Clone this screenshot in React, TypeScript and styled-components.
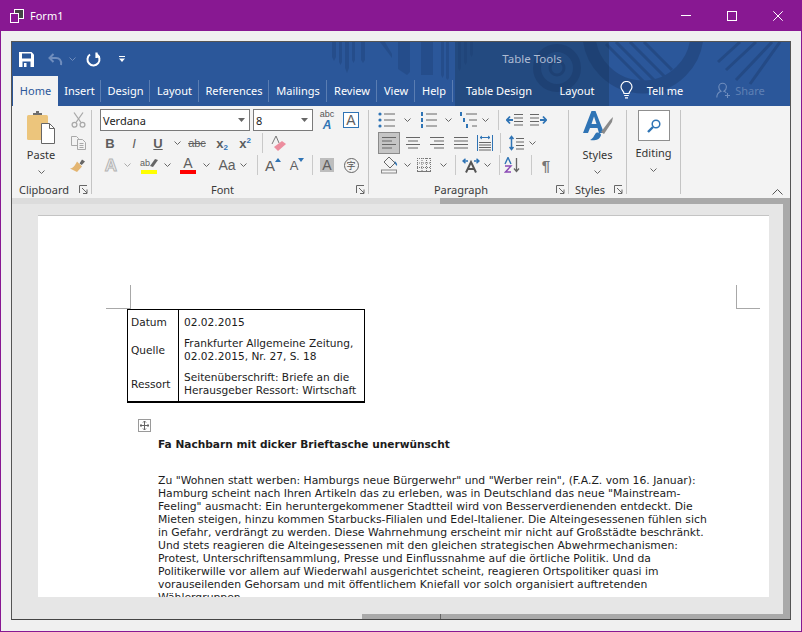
import React from 'react'
import styled, { createGlobalStyle } from 'styled-components'

const UI_FONT = `'Noto Sans', 'Open Sans', sans-serif`
const DOC_FONT = `'DejaVu Sans', Verdana, sans-serif`

const COLORS = {
  PURPLE: '#881892',
  BLUE: '#2b579a',
  BLUE_DARK: '#234a80',
  RIBBON: '#f3f3f3',
  DOC: '#e6e6e6',
  BAR: '#a9a9a9',
  ICON: '#5e5e5e',
  ICON_LIGHT: '#a9a9a9',
  ACCENT: '#2f74b5',
}

const GlobalStyle = createGlobalStyle`
  html, body {
    margin: 0;
    width: 802px;
    height: 632px;
    overflow: hidden;
    background: ${COLORS.PURPLE};
  }
`

const Window = styled.div`
  width: 802px;
  height: 632px;
  box-sizing: border-box;
  display: flex;
  flex-direction: column;
  border: 1px solid ${COLORS.PURPLE};
  border-top: 0;
  font-family: ${UI_FONT};
`

const TitleBar = styled.div`
  height: 31px;
  flex: none;
  display: flex;
  align-items: center;
  padding-left: 9px;
  background: ${COLORS.PURPLE};
  color: #fff;
  font-size: 11px;
`

const TitleText = styled.span`
  margin-left: 6px;
  flex: 1;
`

const WinButton = styled.span`
  width: 46px;
  height: 31px;
  display: flex;
  align-items: center;
  justify-content: center;
`

const Client = styled.div`
  flex: 1;
  min-height: 0;
  display: flex;
  padding: 10px 10px 11px 10px;
  background: #f0f0f0;
`

const Host = styled.div`
  flex: 1;
  min-width: 0;
  display: flex;
  flex-direction: column;
  border: 1px solid #555;
  border-bottom-color: #444;
`

const Header = styled.div`
  position: relative;
  height: 64px;
  flex: none;
  background: ${COLORS.BLUE};
  color: #fff;
  overflow: hidden;
`

const Pattern = styled.svg`
  position: absolute;
  left: 0;
  top: 0;
`

const Qat = styled.div`
  position: relative;
  height: 34px;
  display: flex;
  align-items: center;
`

const ContextLabel = styled.span`
  margin-left: 323px;
  width: 154px;
  margin-top: -2px;
  text-align: center;
  color: #aebbd3;
  font-size: 11.5px;
`

const Tabs = styled.div`
  position: relative;
  height: 30px;
  display: flex;
`

const Tab = styled.div<{ $w: number; $active?: boolean; $line?: boolean; $dim?: boolean }>`
  width: ${(p) => p.$w}px;
  height: 30px;
  box-sizing: border-box;
  flex: none;
  display: flex;
  align-items: center;
  justify-content: center;
  padding-bottom: 2px;
  font-size: 11px;
  background: ${(p) => (p.$active ? COLORS.RIBBON : 'transparent')};
  color: ${(p) => (p.$active ? COLORS.BLUE : p.$dim ? '#5f80b4' : '#fff')};
  position: relative;

  &::after {
    content: '';
    display: ${(p) => (p.$line ? 'block' : 'none')};
    position: absolute;
    right: 0;
    top: 4px;
    bottom: 4px;
    width: 1px;
    background: #5a7db2;
  }
`

const Ribbon = styled.div`
  position: relative;
  height: 92px;
  flex: none;
  display: flex;
  background: ${COLORS.RIBBON};
  color: #333;
`

const Group = styled.div<{ $w: number }>`
  width: ${(p) => p.$w}px;
  flex: none;
  display: flex;
  flex-direction: column;
  box-sizing: border-box;
`

const GroupBody = styled.div`
  flex: 1;
  min-height: 0;
  padding-top: 2px;
`

const GroupFoot = styled.div`
  height: 20px;
  display: flex;
  align-items: center;
  padding-top: 2px;
  box-sizing: border-box;
  font-size: 11px;
  color: #3a3a3a;
`

const FootLabel = styled.span`
  flex: 1;
  text-align: center;
`

const Launcher = styled.span`
  width: 15px;
  display: flex;
  justify-content: center;
`

const Divider = styled.div`
  width: 1px;
  flex: none;
  margin: 4px 0;
  background: #c4c4c4;
`

const Row = styled.div<{ $h: number }>`
  height: ${(p) => p.$h}px;
  display: flex;
  align-items: center;
`

const Cell = styled.span<{ $w: number; $ml?: number; $pressed?: boolean; $h?: number }>`
  width: ${(p) => p.$w}px;
  height: ${(p) => p.$h ?? 22}px;
  margin-left: ${(p) => p.$ml ?? 0}px;
  flex: none;
  box-sizing: border-box;
  display: flex;
  align-items: center;
  justify-content: center;
  background: ${(p) => (p.$pressed ? '#c5c5c5' : 'transparent')};
  border: ${(p) => (p.$pressed ? '1px solid #8a8a8a' : '0')};
`

const StackCell = styled.span<{ $w: number }>`
  width: ${(p) => p.$w}px;
  flex: none;
  display: flex;
  flex-direction: column;
  align-items: center;
  line-height: 1;
`

const Sep = styled.span<{ $ml: number }>`
  width: 1px;
  height: 20px;
  flex: none;
  margin-left: ${(p) => p.$ml}px;
  background: #c9c9c9;
`

const Combo = styled.div<{ $w: number; $ml?: number }>`
  width: ${(p) => p.$w}px;
  height: 22px;
  margin-left: ${(p) => p.$ml ?? 0}px;
  flex: none;
  box-sizing: border-box;
  display: flex;
  align-items: center;
  justify-content: space-between;
  padding: 0 4px 0 2px;
  background: #fff;
  border: 1px solid #7a7a7a;
  font-size: 11px;
  color: #222;
`

const Glyph = styled.span<{ $size: number; $weight?: number; $italic?: boolean; $color?: string; $underline?: boolean; $strike?: boolean }>`
  font-family: 'Liberation Sans', sans-serif;
  font-size: ${(p) => p.$size}px;
  font-weight: ${(p) => p.$weight ?? 400};
  font-style: ${(p) => (p.$italic ? 'italic' : 'normal')};
  color: ${(p) => p.$color ?? COLORS.ICON};
  text-decoration: ${(p) => (p.$underline ? 'underline' : p.$strike ? 'line-through' : 'none')};
  line-height: 1;
`

const OutlineA = styled(Glyph)`
  color: #f0f0f0;
  -webkit-text-stroke: 1px #b4b4b4;
  font-weight: 700;
`

const Sub = styled.sub`
  font-size: 8px;
  color: ${COLORS.ACCENT};
  vertical-align: -2px;
  line-height: 0;
  font-weight: 700;
`

const Sup = styled.sup`
  font-size: 8px;
  color: ${COLORS.ACCENT};
  vertical-align: 5px;
  line-height: 0;
  font-weight: 700;
`

const ColorA = styled.span<{ $bar: string }>`
  display: flex;
  flex-direction: column;
  align-items: center;
  width: 16px;
  font-family: 'Liberation Sans', sans-serif;
  color: ${COLORS.ICON};
  font-size: 14px;
  line-height: 13px;

  &::after {
    content: '';
    width: 16px;
    height: 4px;
    background: ${(p) => p.$bar};
  }
`

const PenRow = styled.span`
  display: flex;
  align-items: center;
  height: 13px;
`

const BoxA = styled.span`
  width: 16px;
  height: 16px;
  box-sizing: border-box;
  display: flex;
  align-items: center;
  justify-content: center;
  border: 1px solid ${COLORS.ACCENT};
  font-family: 'Liberation Sans', sans-serif;
  font-size: 14px;
  color: ${COLORS.ICON};
  background: #fff;
`

const ShadedA = styled.span`
  width: 14px;
  height: 14px;
  display: flex;
  align-items: center;
  justify-content: center;
  background: #bdbdbd;
  font-family: 'Liberation Sans', sans-serif;
  font-size: 14px;
  color: ${COLORS.ICON};
`

const CircleChar = styled.span`
  width: 15px;
  height: 15px;
  box-sizing: border-box;
  display: flex;
  align-items: center;
  justify-content: center;
  border: 1px solid #666;
  border-radius: 50%;
  font-family: 'Noto Sans CJK SC', sans-serif;
  font-size: 9px;
  color: #555;
`

const BigButton = styled.div<{ $w: number; $ml?: number }>`
  width: ${(p) => p.$w}px;
  margin-left: ${(p) => p.$ml ?? 0}px;
  flex: none;
  display: flex;
  flex-direction: column;
  align-items: center;
  font-size: 11px;
  color: #333;
`

const BigLabel = styled.span<{ $mt: number }>`
  margin-top: ${(p) => p.$mt}px;
  line-height: 16px;
`

const ChevWrap = styled.span`
  display: flex;
  margin-top: 7px;
`

const SmallColumn = styled.div`
  display: flex;
  flex-direction: column;
`

const Split = styled.div`
  display: flex;
`

const EditBox = styled.div`
  width: 32px;
  height: 31px;
  margin-top: 2px;
  box-sizing: border-box;
  display: flex;
  align-items: center;
  justify-content: center;
  background: #fff;
  border: 1px solid #8f8f8f;
`

const Collapse = styled.span`
  position: absolute;
  right: 7px;
  bottom: 3px;
  display: flex;
`

const Doc = styled.div`
  flex: 1;
  min-height: 0;
  display: flex;
  flex-direction: column;
  background: ${COLORS.DOC};
`

const TopStrip = styled.div`
  height: 6px;
  flex: none;
  display: flex;
  background: #dcdcdc;
`

const Fill = styled.div<{ $ml: number }>`
  flex: 1;
  margin-left: ${(p) => p.$ml}px;
  background: ${COLORS.BAR};
  display: flex;
`

const Tick = styled.span<{ $ml: number }>`
  width: 1px;
  margin-left: ${(p) => p.$ml}px;
  background: #666;
`

const Middle = styled.div`
  flex: 1;
  min-height: 0;
  display: flex;
`

const PageArea = styled.div`
  flex: 1;
  min-width: 0;
  padding: 12px 14px 17px 26px;
  display: flex;
`

const RightBar = styled.div`
  width: 7px;
  flex: none;
  background: ${COLORS.BAR};
`

const BottomStrip = styled.div`
  height: 5px;
  flex: none;
  display: flex;
`

const Page = styled.div`
  position: relative;
  flex: 1;
  background: #fff;
  box-shadow: 0 -1px 0 #c4c4c4;
  padding: 93px 0 0 89px;
  overflow: hidden;
  font-family: ${DOC_FONT};
  font-size: 10.8px;
  line-height: 13px;
  color: #1c1c1c;
`

const CropMark = styled.span<{ $side: 'left' | 'right' }>`
  position: absolute;
  top: 69px;
  left: ${(p) => (p.$side === 'left' ? 92 : 698)}px;
  width: 1px;
  height: 24px;
  background: #a8a8a8;

  &::after {
    content: '';
    position: absolute;
    bottom: 0;
    left: ${(p) => (p.$side === 'left' ? -24 : 0)}px;
    width: 24px;
    height: 1px;
    background: #a8a8a8;
  }
`

const InfoTable = styled.table`
  width: 238px;
  height: 93px;
  box-sizing: border-box;
  border-collapse: separate;
  border-spacing: 0;
  border: 1px solid #000;
  border-bottom-width: 2px;
  table-layout: fixed;
  font-size: 10.6px;
  line-height: 13px;
  white-space: nowrap;
`

const InfoRow = styled.tr<{ $pt: number; $pb: number; $h: number }>`
  height: ${(p) => p.$h}px;

  & > td {
    padding: ${(p) => p.$pt}px 0 ${(p) => p.$pb}px 5px;
    vertical-align: middle;
  }

  & > td:first-child {
    width: 47px;
    padding-left: 3px;
    border-right: 1px solid #000;
  }
`

const MoveHandle = styled.div`
  width: 13px;
  height: 13px;
  box-sizing: border-box;
  margin: 16px 0 0 11px;
  display: flex;
  align-items: center;
  justify-content: center;
  border: 1px solid #9a9a9a;
  background: #fff;
`

const Article = styled.div`
  padding-left: 31px;
  white-space: nowrap;
`

const Heading = styled.div`
  margin-top: 6px;
  font-weight: 700;
  font-size: 10.6px;
`

const Body = styled.div`
  margin-top: 23px;
`

const Icon = styled.svg`
  display: block;
  flex: none;
`

const Chev = ({ color = '#666' }: { color?: string }) => (
  <Icon width="7" height="4" viewBox="0 0 7 4" fill="none" stroke={color}>
    <path d="M.5.5l3 3 3-3" />
  </Icon>
)

const Launch = () => (
  <Icon width="9" height="9" viewBox="0 0 9 9" fill="none" stroke="#666">
    <path d="M.5 8V.5H8M3 3l5 5M8 4.5V8.5H4" />
  </Icon>
)

const Lines = ({ rows }: { rows: [number, number][] }) => (
  <Icon width="16" height="14" viewBox="0 0 16 14" stroke="#666">
    {rows.map(([x1, x2], i) => (
      <path key={i} d={`M${x1} ${1.5 + i * 3.5}H${x2}`} />
    ))}
  </Icon>
)

const BulletList = ({ kind }: { kind: 'dot' | 'num' | 'multi' }) => (
  <Icon width="18" height="18" viewBox="0 0 18 18">
    {[3, 9, 15].map((y, i) => (
      <g key={y}>
        {kind === 'dot' && <circle cx={2} cy={y} r={1.6} fill={COLORS.ACCENT} />}
        {kind !== 'dot' && <rect x={kind === 'multi' ? 0 + i * 3 : 1} y={y - 2} width={2} height={4} fill={COLORS.ACCENT} />}
        <path d={`M${kind === 'multi' ? 6 + i * 3 : 6} ${y}H17`} stroke="#666" />
      </g>
    ))}
  </Icon>
)

const IndentIcon = ({ flip }: { flip?: boolean }) => (
  <Icon width="17" height="14" viewBox="0 0 17 14" stroke="#666" style={flip ? { transform: 'scaleX(-1)' } : undefined}>
    <path d="M8 1.5H17M8 5H17M8 8.5H17M8 12H17" />
    <path d="M1 7h6M4 3.5L.8 7 4 10.5" fill="none" stroke={COLORS.ACCENT} strokeWidth="1.8" />
  </Icon>
)

const DropArrow = () => (
  <Icon width="7" height="4" viewBox="0 0 7 4" fill="#666">
    <path d="M0 0h7L3.500 4z" />
  </Icon>
)

const App = () => (
  <>
    <GlobalStyle />
    <Window>
      <TitleBar>
        <Icon width="14" height="14" viewBox="0 0 14 14">
          <rect x="4.5" y="0.5" width="9" height="9" fill="#444" stroke="#fff" />
          <rect x="0.5" y="4.5" width="8" height="9" fill={COLORS.PURPLE} stroke="#fff" />
        </Icon>
        <TitleText>Form1</TitleText>
        <WinButton>
          <Icon width="10" height="1" viewBox="0 0 10 1">
            <rect width="10" height="1" fill="#fff" />
          </Icon>
        </WinButton>
        <WinButton>
          <Icon width="10" height="10" viewBox="0 0 10 10" fill="none" stroke="#fff">
            <rect x=".5" y=".5" width="9" height="9" />
          </Icon>
        </WinButton>
        <WinButton>
          <Icon width="10" height="10" viewBox="0 0 10 10" fill="none" stroke="#fff">
            <path d="M.3.3l9.4 9.4M9.7.3L.3 9.7" />
          </Icon>
        </WinButton>
      </TitleBar>
      <Client>
        <Host>
          <Header>
            <Pattern width="778" height="64" viewBox="12 42 778 64">
              <rect x="455" y="42" width="154" height="64" fill={COLORS.BLUE_DARK} />
              <g fill="#1c3c70" opacity=".34">
                <path d="M332 42h4v15l-2 4-2-4zM339 42h3v20l-1.5 3-1.5-3zM345 42h4v26l-2 5-2-5zM352 42h3v18l-1.5 3-1.5-3zM361 42h4v18l-2 3-2-3z" />
                <path d="M380 42h5l7 12v4zM398 42h12v30l-3 3-9-6zM421 42h12v33h-12zM441 42h3v33l-1.5 3-1.5-3zM446 42h3v36l-1.5 2-1.5-2zM458 42h3v26l-1.5 3-1.5-3zM464 42h3v20l-1.5 3-1.5-3zM470 42h3v12l-1.5 3-1.5-3z" />
              </g>
              <g fill="none" stroke="#16305c" opacity=".32">
                <circle cx="557" cy="68" r="20" strokeWidth="8" />
                <circle cx="557" cy="68" r="7" strokeWidth="3" />
                <circle cx="643" cy="33" r="54" strokeWidth="13" />
                <path d="M606 44l50 50M616 42l54 54M630 42l36 36M644 42l28 28M718 62l22-20M726 70l30-28M736 80l36-38M750 84l30-42" strokeWidth="3" />
              </g>
            </Pattern>
            <Qat>
              <Cell $w={28}>
                <Icon width="15" height="15" viewBox="0 0 15 15">
                  <path d="M0 0h12.5L15 2.5V15H0z" fill="#fff" />
                  <rect x="3" y="1.5" width="9" height="5" fill={COLORS.BLUE} />
                  <rect x="3.5" y="9.5" width="8" height="5.5" fill={COLORS.BLUE} />
                  <rect x="5" y="11" width="2.5" height="4" fill="#fff" />
                </Icon>
              </Cell>
              <Cell $w={20} $ml={5}>
                <Icon width="15" height="13" viewBox="0 0 15 13" fill="none" stroke="#6f8dbd" strokeWidth="2">
                  <path d="M13 12c1-5-2-7-5-7H2M5.5 1L1.5 5l4 4" />
                </Icon>
              </Cell>
              <Cell $w={14}>
                <Chev color="#6f8dbd" />
              </Cell>
              <Cell $w={28}>
                <Icon width="15" height="15" viewBox="0 0 15 15" fill="none" stroke="#fff" strokeWidth="2">
                  <path d="M4 2.500A6 6 0 1 0 10.500 2.200" />
                  <path d="M10.500 .5v5.500" strokeWidth="2.200" />
                  <path d="M10 4.800h4" strokeWidth="1.500" />
                </Icon>
              </Cell>
              <Cell $w={20} $ml={5}>
                <Icon width="6" height="6" viewBox="0 0 6 6" fill="#fff">
                  <rect width="6" height="1" />
                  <path d="M0 2.5h6l-3 3.5z" />
                </Icon>
              </Cell>
              <ContextLabel>Table Tools</ContextLabel>
            </Qat>
            <Tabs>
              <Tab $w={1} />
              <Tab $w={45} $active>Home</Tab>
              <Tab $w={43} $line>Insert</Tab>
              <Tab $w={49} $line>Design</Tab>
              <Tab $w={49} $line>Layout</Tab>
              <Tab $w={70} $line>References</Tab>
              <Tab $w={58} $line>Mailings</Tab>
              <Tab $w={50} $line>Review</Tab>
              <Tab $w={38} $line>View</Tab>
              <Tab $w={38} $line>Help</Tab>
              <Tab $w={92}>Table Design</Tab>
              <Tab $w={64}>Layout</Tab>
              <Tab $w={34}>
                <Icon width="13" height="18" viewBox="0 0 13 18" fill="none" stroke="#fff" strokeWidth="1.2">
                  <path d="M4 12.5C4 10 1 9 1 6a5.5 5.5 0 0 1 11 0c0 3-3 4-3 6.5zM4.2 14.5h4.6M5 16.8h3" />
                </Icon>
              </Tab>
              <Tab $w={44}>Tell me</Tab>
              <Tab $w={28} />
              <Tab $w={16}>
                <Icon width="15" height="16" viewBox="0 0 15 16" fill="none" stroke="#6f8dbd" strokeWidth="1.1">
                  <path d="M.8 15.5c0-3.5 2-5.5 4.2-6.3C3.500 8.300 2.800 6.800 2.800 5a3.800 3.800 0 0 1 7.600 0c0 2-1 3.500-2.500 4.300 1 .4 1.700.8 2.300 1.500M11.500 11v5M9 13.500h5" />
                </Icon>
              </Tab>
              <Tab $w={38} $dim>Share</Tab>
            </Tabs>
          </Header>
          <Ribbon>
            <Group $w={79}>
              <GroupBody>
                <Split>
                  <BigButton $w={54} $ml={2}>
                    <Icon width="28" height="33" viewBox="0 0 28 33" style={{ marginTop: 3 }}>
                      <rect x="0" y="4" width="21" height="25" rx="1.500" fill="#ecc57c" />
                      <path d="M6 4h9V2h-3V0h-3v2H6z" fill="#6e6e6e" />
                      <path d="M14.500 12.500h8l5 5v15h-13z" fill="#fff" stroke="#666" />
                      <path d="M22.500 12.500v5h5" fill="none" stroke="#666" />
                    </Icon>
                    <BigLabel $mt={3}>Paste</BigLabel>
                    <ChevWrap>
                      <Chev />
                    </ChevWrap>
                  </BigButton>
                  <SmallColumn>
                    <Cell $w={20} $h={23}>
                      <Icon width="15" height="16" viewBox="0 0 15 16" fill="none" stroke="#a9a9a9" strokeWidth="1.3">
                        <path d="M3 .5l7 10M12 .5l-7 10" />
                        <circle cx="3.500" cy="12.800" r="2.400" />
                        <circle cx="11.500" cy="12.800" r="2.400" />
                      </Icon>
                    </Cell>
                    <Cell $w={20} $h={23}>
                      <Icon width="15" height="14" viewBox="0 0 15 14" fill="#f3f3f3" stroke="#a9a9a9">
                        <path d="M.5.5h5l2 2v7h-7z" />
                        <path d="M6.500 3.500h5l3 3v7h-8z" />
                        <path d="M8.500 7.500h4M8.500 9.500h4M8.500 11.500h4" />
                      </Icon>
                    </Cell>
                    <Cell $w={20} $h={23}>
                      <Icon width="16" height="15" viewBox="0 0 16 15">
                        <path d="M9.500 5.500L12 1.500l3 2-3.200 3.600z" fill="#666" />
                        <path d="M7 3.500l5 5-5 5.500-7-3.500c3 0 5-3 7-7z" fill="#e3b571" />
                      </Icon>
                    </Cell>
                  </SmallColumn>
                </Split>
              </GroupBody>
              <GroupFoot>
                <FootLabel>Clipboard</FootLabel>
                <Launcher>
                  <Launch />
                </Launcher>
              </GroupFoot>
            </Group>
            <Divider />
            <Group $w={276}>
              <GroupBody>
                <Row $h={24}>
                  <Combo $w={150} $ml={8}>
                    Verdana
                    <DropArrow />
                  </Combo>
                  <Combo $w={60} $ml={3}>
                    8
                    <DropArrow />
                  </Combo>
                  <StackCell $w={28}>
                    <Glyph $size={9} $color="#555">abc</Glyph>
                    <Glyph $size={12} $weight={700} $italic $color={COLORS.ACCENT}>A</Glyph>
                  </StackCell>
                  <Cell $w={20}>
                    <BoxA>A</BoxA>
                  </Cell>
                </Row>
                <Row $h={22}>
                  <Cell $w={20} $ml={8}>
                    <Glyph $size={13} $weight={700}>B</Glyph>
                  </Cell>
                  <Cell $w={28}>
                    <Glyph $size={13} $italic>I</Glyph>
                  </Cell>
                  <Cell $w={20}>
                    <Glyph $size={13} $weight={700} $underline>U</Glyph>
                  </Cell>
                  <Cell $w={18}>
                    <Chev />
                  </Cell>
                  <Cell $w={22}>
                    <Glyph $size={11} $strike>abc</Glyph>
                  </Cell>
                  <Cell $w={28}>
                    <Glyph $size={13} $weight={700}>x<Sub>2</Sub></Glyph>
                  </Cell>
                  <Cell $w={18}>
                    <Glyph $size={13} $weight={700}>x<Sup>2</Sup></Glyph>
                  </Cell>
                  <Sep $ml={8} />
                  <Cell $w={14} $ml={8}>
                    <Icon width="15" height="17" viewBox="0 0 15 17">
                      <path d="M1 9L5 1l3 7" fill="none" stroke="#777" />
                      <path d="M3 12l8-6 4 3-8 7z" fill="#ec8d9e" />
                    </Icon>
                  </Cell>
                </Row>
                <Row $h={22}>
                  <Cell $w={22} $ml={8}>
                    <OutlineA $size={17}>A</OutlineA>
                  </Cell>
                  <Cell $w={10}>
                    <Chev color="#aaa" />
                  </Cell>
                  <Cell $w={26} $ml={4}>
                    <ColorA $bar="#ffff00">
                      <PenRow>
                        <Glyph $size={9}>ab</Glyph>
                        <Icon width="8" height="10" viewBox="0 0 8 10">
                          <path d="M0 8l5-7 3 1-5 7z" fill="#666" />
                        </Icon>
                      </PenRow>
                    </ColorA>
                  </Cell>
                  <Cell $w={10}>
                    <Chev />
                  </Cell>
                  <Cell $w={22} $ml={5}>
                    <ColorA $bar="#ff0000">A</ColorA>
                  </Cell>
                  <Cell $w={10} $ml={2}>
                    <Chev />
                  </Cell>
                  <Cell $w={22} $ml={5}>
                    <Glyph $size={14}>Aa</Glyph>
                  </Cell>
                  <Cell $w={10}>
                    <Chev />
                  </Cell>
                  <Sep $ml={9} />
                  <Cell $w={22} $ml={4}>
                    <Glyph $size={15}>A</Glyph>
                    <Icon width="6" height="4" viewBox="0 0 6 4" fill={COLORS.ACCENT} style={{ marginTop: -10 }}>
                      <path d="M0 4l3-4 3 4z" />
                    </Icon>
                  </Cell>
                  <Cell $w={22} $ml={2}>
                    <Glyph $size={13}>A</Glyph>
                    <Icon width="6" height="4" viewBox="0 0 6 4" fill={COLORS.ACCENT} style={{ marginTop: -10 }}>
                      <path d="M0 0h6L3 4z" />
                    </Icon>
                  </Cell>
                  <Sep $ml={4} />
                  <Cell $w={22} $ml={3}>
                    <ShadedA>A</ShadedA>
                  </Cell>
                  <Cell $w={22} $ml={2}>
                    <CircleChar>字</CircleChar>
                  </Cell>
                </Row>
              </GroupBody>
              <GroupFoot>
                <FootLabel>Font</FootLabel>
                <Launcher>
                  <Launch />
                </Launcher>
              </GroupFoot>
            </Group>
            <Divider />
            <Group $w={199}>
              <GroupBody>
                <Row $h={24}>
                  <Cell $w={20} $ml={8}>
                    <BulletList kind="dot" />
                  </Cell>
                  <Cell $w={20}>
                    <Chev />
                  </Cell>
                  <Cell $w={20} $ml={2}>
                    <BulletList kind="num" />
                  </Cell>
                  <Cell $w={18}>
                    <Chev />
                  </Cell>
                  <Cell $w={20} $ml={2}>
                    <BulletList kind="multi" />
                  </Cell>
                  <Cell $w={12}>
                    <Chev />
                  </Cell>
                  <Sep $ml={7} />
                  <Cell $w={20} $ml={5}>
                    <IndentIcon />
                  </Cell>
                  <Cell $w={20} $ml={4}>
                    <IndentIcon flip />
                  </Cell>
                </Row>
                <Row $h={22}>
                  <Cell $w={22} $ml={9} $pressed>
                    <Lines rows={[[1, 15], [1, 11], [1, 15], [1, 11]]} />
                  </Cell>
                  <Cell $w={24} $ml={1}>
                    <Lines rows={[[1, 15], [3, 13], [1, 15], [3, 13]]} />
                  </Cell>
                  <Cell $w={24}>
                    <Lines rows={[[1, 15], [5, 15], [1, 15], [5, 15]]} />
                  </Cell>
                  <Cell $w={24}>
                    <Lines rows={[[1, 15], [1, 15], [1, 15], [1, 15]]} />
                  </Cell>
                  <Cell $w={24}>
                    <Icon width="16" height="16" viewBox="0 0 16 16" fill="none">
                      <path d="M.5 0v16M15.500 0v16" stroke={COLORS.ACCENT} />
                      <path d="M3 2.500h10M5 1l-2 1.500L5 4M11 1l2 1.500L11 4" stroke={COLORS.ACCENT} />
                      <path d="M2 7.500h12M2 10h12M2 12.500h12M2 15h12" stroke="#666" />
                    </Icon>
                  </Cell>
                  <Sep $ml={3} />
                  <Cell $w={24} $ml={3}>
                    <Icon width="15" height="16" viewBox="0 0 15 16" fill="none">
                      <path d="M2.500 2v12M.5 4l2-2.500L4.500 4M.5 12l2 2.500 2-2.500" stroke={COLORS.ACCENT} strokeWidth="1.500" />
                      <path d="M7 3.500h8M7 7h8M7 10.500h8M7 14h8" stroke="#666" />
                    </Icon>
                  </Cell>
                  <Cell $w={8}>
                    <Chev />
                  </Cell>
                </Row>
                <Row $h={22}>
                  <Cell $w={22} $ml={9}>
                    <Icon width="17" height="18" viewBox="0 0 17 18" fill="none">
                      <path d="M8 1l6 6-5 5-6-6z" stroke="#666" />
                      <path d="M13.500 5c2 1 3 3 2.500 5-1.500-1-2.500-3-2.500-5z" fill={COLORS.ACCENT} />
                      <rect x=".5" y="14" width="15" height="3" stroke="#888" />
                    </Icon>
                  </Cell>
                  <Cell $w={14}>
                    <Chev />
                  </Cell>
                  <Cell $w={20}>
                    <Icon width="14" height="14" viewBox="0 0 14 14" stroke="#777" strokeDasharray="1 1" fill="none">
                      <path d="M.5 0v14M5 0v14M9.500 0v14M13.500 0v14M0 .5h14M0 5h14M0 9.500h14" />
                      <path d="M0 13.500h14" strokeDasharray="none" />
                    </Icon>
                  </Cell>
                  <Cell $w={18}>
                    <Chev />
                  </Cell>
                  <Sep $ml={3} />
                  <Cell $w={24} $ml={3}>
                    <Icon width="18" height="15" viewBox="0 0 18 15" fill="none">
                      <path d="M1 3h5M3.500 .8L1 3l2.500 2.200M17 3h-5M14.500 .8L17 3l-2.500 2.200" stroke={COLORS.ACCENT} strokeWidth="1.500" />
                      <path d="M4 14.500L9 4l5 10.500M6 11h6" stroke="#555" strokeWidth="2" />
                    </Icon>
                  </Cell>
                  <Cell $w={8}>
                    <Chev />
                  </Cell>
                  <Sep $ml={8} />
                  <Cell $w={24}>
                    <Icon width="16" height="16" viewBox="0 0 16 16" fill="none">
                      <path d="M1 7l3-6.500L7 7" stroke={COLORS.ACCENT} strokeWidth="1.400" />
                      <path d="M1 9h6L1.500 15H7" stroke="#8b4ab5" strokeWidth="1.400" />
                      <path d="M12.500 1v13M10 11.500l2.500 3 2.500-3" stroke="#666" strokeWidth="1.300" />
                    </Icon>
                  </Cell>
                  <Sep $ml={7} />
                  <Cell $w={24} $ml={2}>
                    <Glyph $size={15} $weight={700} $color="#777">¶</Glyph>
                  </Cell>
                </Row>
              </GroupBody>
              <GroupFoot>
                <FootLabel>Paragraph</FootLabel>
                <Launcher>
                  <Launch />
                </Launcher>
              </GroupFoot>
            </Group>
            <Divider />
            <Group $w={57}>
              <GroupBody>
                <BigButton $w={57}>
                  <Icon width="30" height="31" viewBox="0 0 30 31" style={{ marginTop: 3, marginLeft: 1 }}>
                    <path d="M0 22L8.500 0h4L21 22h-5l-1.500-5h-7.500L5 22zM8.500 13h5L11 5.500z" fill={COLORS.ACCENT} />
                    <path d="M18 21l9-12 3-3-1 5-8 12z" fill="#8a8a8a" />
                    <path d="M7 29c4 1 10 0 11-5 0-2-3-3-5-2-2 2-2 5-6 7z" fill={COLORS.ACCENT} />
                  </Icon>
                  <BigLabel $mt={5}>Styles</BigLabel>
                  <ChevWrap>
                    <Chev />
                  </ChevWrap>
                </BigButton>
              </GroupBody>
              <GroupFoot>
                <FootLabel>Styles</FootLabel>
                <Launcher>
                  <Launch />
                </Launcher>
              </GroupFoot>
            </Group>
            <Divider />
            <Group $w={53}>
              <GroupBody>
                <BigButton $w={53}>
                  <EditBox>
                    <Icon width="14" height="14" viewBox="0 0 14 14" fill="none" stroke={COLORS.ACCENT}>
                      <circle cx="9" cy="5" r="3.800" strokeWidth="1.500" />
                      <path d="M6 8L1 13" strokeWidth="2.400" />
                    </Icon>
                  </EditBox>
                  <BigLabel $mt={4}>Editing</BigLabel>
                  <ChevWrap>
                    <Chev />
                  </ChevWrap>
                </BigButton>
              </GroupBody>
            </Group>
            <Divider />
            <Collapse>
              <Icon width="11" height="6" viewBox="0 0 11 6" fill="none" stroke="#555">
                <path d="M.5 5.500l5-5 5 5" />
              </Icon>
            </Collapse>
          </Ribbon>
          <Doc>
            <TopStrip>
              <Fill $ml={428} />
            </TopStrip>
            <Middle>
              <PageArea>
                <Page>
                  <CropMark $side="left" />
                  <CropMark $side="right" />
                  <InfoTable>
                    <tbody>
                      <InfoRow $h={24} $pt={6} $pb={5}>
                        <td>Datum</td>
                        <td>02.02.2015</td>
                      </InfoRow>
                      <InfoRow $h={30} $pt={3} $pb={1}>
                        <td>Quelle</td>
                        <td>
                          Frankfurter Allgemeine Zeitung,
                          <br />
                          02.02.2015, Nr. 27, S. 18
                        </td>
                      </InfoRow>
                      <InfoRow $h={37} $pt={7} $pb={4}>
                        <td>Ressort</td>
                        <td>
                          Seitenüberschrift: Briefe an die
                          <br />
                          Herausgeber Ressort: Wirtschaft
                        </td>
                      </InfoRow>
                    </tbody>
                  </InfoTable>
                  <MoveHandle>
                    <Icon width="9" height="9" viewBox="0 0 9 9" fill="none" stroke="#666">
                      <path d="M4.500 0v9M0 4.500h9M3 1.500L4.500 0 6 1.500M3 7.500L4.500 9 6 7.500M1.500 3L0 4.500 1.500 6M7.500 3L9 4.500 7.500 6" />
                    </Icon>
                  </MoveHandle>
                  <Article>
                    <Heading>Fa Nachbarn mit dicker Brieftasche unerwünscht</Heading>
                    <Body>
                      Zu "Wohnen statt werben: Hamburgs neue Bürgerwehr" und "Werber rein", (F.A.Z. vom 16. Januar):
                      <br />
                      Hamburg scheint nach Ihren Artikeln das zu erleben, was in Deutschland das neue "Mainstream-
                      <br />
                      Feeling" ausmacht: Ein heruntergekommener Stadtteil wird von Besserverdienenden entdeckt. Die
                      <br />
                      Mieten steigen, hinzu kommen Starbucks-Filialen und Edel-Italiener. Die Alteingesessenen fühlen sich
                      <br />
                      in Gefahr, verdrängt zu werden. Diese Wahrnehmung erscheint mir nicht auf Großstädte beschränkt.
                      <br />
                      Und stets reagieren die Alteingesessenen mit den gleichen strategischen Abwehrmechanismen:
                      <br />
                      Protest, Unterschriftensammlung, Presse und Einflussnahme auf die örtliche Politik. Und da
                      <br />
                      Politikerwille vor allem auf Wiederwahl ausgerichtet scheint, reagieren Ortspolitiker quasi im
                      <br />
                      vorauseilenden Gehorsam und mit öffentlichem Kniefall vor solch organisiert auftretenden
                      <br />
                      Wählergruppen
                    </Body>
                  </Article>
                </Page>
              </PageArea>
              <RightBar />
            </Middle>
            <BottomStrip>
              <Fill $ml={350}>
                <Tick $ml={78} />
              </Fill>
            </BottomStrip>
          </Doc>
        </Host>
      </Client>
    </Window>
  </>
)

export default App
